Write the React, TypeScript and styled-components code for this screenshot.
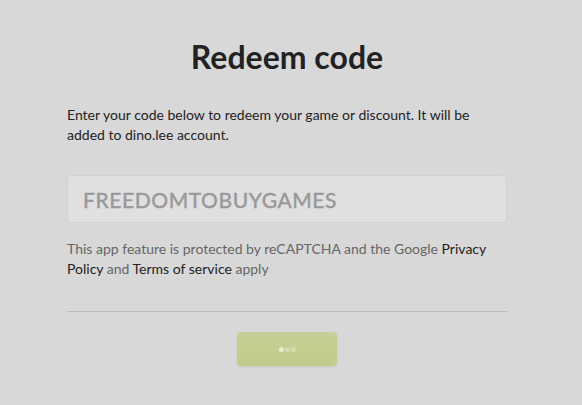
import React from "react";
import styled, { createGlobalStyle } from "styled-components";

const Global = createGlobalStyle`
  html, body { margin: 0; padding: 0; background: #d8d8d8; }
  body { font-family: Lato, "Noto Sans", sans-serif; color: #222; }
`;

const Page = styled.div`
  width: 582px;
  height: 405px;
  box-sizing: border-box;
  padding: 37px 0 0 67px;
`;

const Column = styled.div`
  width: 440px;
  display: flex;
  flex-direction: column;
`;

const Title = styled.h1`
  margin: 0;
  font-size: 32px;
  line-height: 40px;
  font-weight: 700;
  color: #222;
  text-align: center;
`;

const Text = styled.p<{ $muted?: boolean }>`
  margin: 0;
  font-size: 14px;
  line-height: 20px;
  color: ${(p) => (p.$muted ? "#666" : "#222")};
`;

const Intro = styled(Text)`
  margin-top: 28px;
`;

const Input = styled.input`
  margin-top: 30px;
  height: 48px;
  box-sizing: border-box;
  width: 440px;
  border: 1px solid #d2d2d2;
  border-radius: 4px;
  background: #e0e0e0;
  padding: 0 15px;
  font-family: Lato, "Noto Sans", sans-serif;
  font-size: 21px;
  font-weight: 400;
  letter-spacing: 0.6px;
  color: #999;
  -webkit-text-stroke: 0.45px #999;
  outline: none;
`;

const Notice = styled(Text)`
  margin-top: 16px;
`;

const Link = styled.a`
  color: #222;
  text-decoration: none;
`;

const Divider = styled.hr`
  margin: 32px 0 0;
  border: 0;
  border-top: 1px solid #bdbdbd;
`;

const ButtonRow = styled.div`
  display: flex;
  justify-content: center;
  margin-top: 20px;
`;

const Button = styled.button`
  width: 100px;
  height: 34px;
  border: 0;
  border-radius: 4px;
  background: linear-gradient(#c6cf97, #bfcc89);
  box-shadow: 0 1px 2px rgba(0, 0, 0, 0.08);
  display: flex;
  align-items: center;
  justify-content: center;
  gap: 1px;
  padding: 0;
`;

const Dot = styled.span<{ $alpha: number }>`
  width: 5px;
  height: 5px;
  border-radius: 50%;
  background: rgba(255, 255, 255, ${(p) => p.$alpha});
`;

export default function App() {
  return (
    <Page>
      <Global />
      <Column>
        <Title>Redeem code</Title>
        <Intro>
          Enter your code below to redeem your game or discount. It will be
          added to dino.lee account.
        </Intro>
        <Input defaultValue="FREEDOMTOBUYGAMES" />
        <Notice $muted>
          This app feature is protected by reCAPTCHA and the Google{" "}
          <Link>Privacy Policy</Link> and <Link>Terms of service</Link> apply
        </Notice>
        <Divider />
        <ButtonRow>
          <Button>
            <Dot $alpha={0.6} />
            <Dot $alpha={0.3} />
            <Dot $alpha={0.3} />
          </Button>
        </ButtonRow>
      </Column>
    </Page>
  );
}
